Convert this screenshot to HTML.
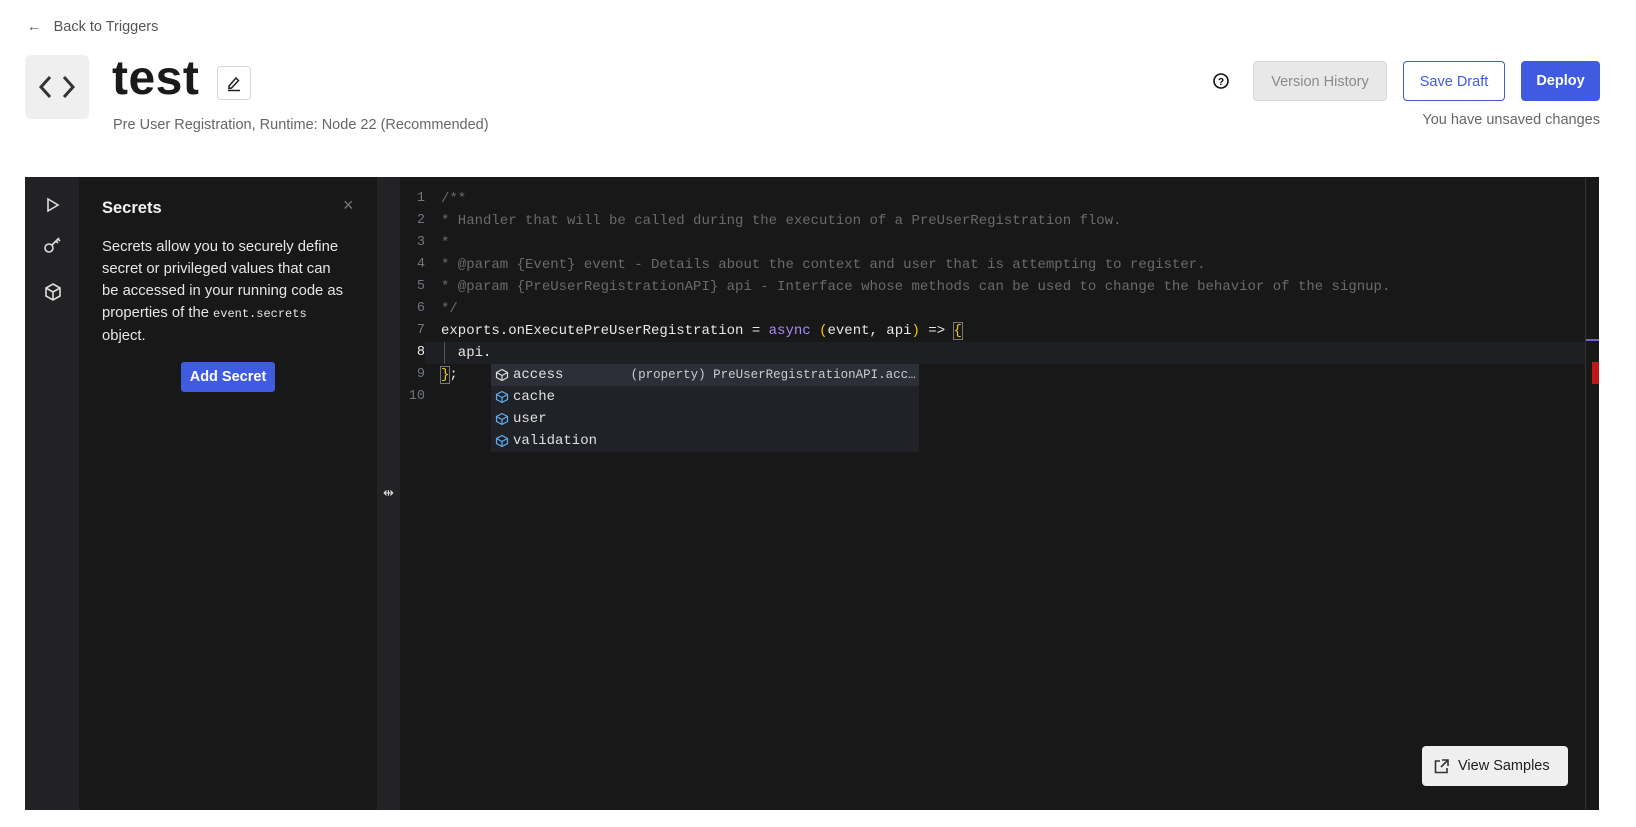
<!DOCTYPE html>
<html><head><meta charset="utf-8"><style>
*{margin:0;padding:0;box-sizing:border-box}
body{width:1636px;height:827px;background:#fff;font-family:"Liberation Sans",sans-serif;position:relative;overflow:hidden;color:#1e1e1e}
.a{position:absolute}
.mono{font-family:"Liberation Mono",monospace}
.ln{position:absolute;left:400px;width:25px;text-align:right;font-size:13.5px;color:#6e7681;font-family:"Liberation Mono",monospace;line-height:22px}
.cl{position:absolute;left:441px;font-size:14px;line-height:22px;font-family:"Liberation Mono",monospace;white-space:pre;color:#6a6a6a}
.sg{position:absolute;left:491px;width:428px;height:22px;font-family:"Liberation Mono",monospace;font-size:14px;line-height:22px;color:#e0e0e0;padding-left:22px;white-space:pre}
.sg svg{position:absolute;left:4px;top:4px}
</style></head><body>
<div class="a" style="left:27px;top:19px;font-size:14.5px;color:#555">←&nbsp;&nbsp;&nbsp;Back to Triggers</div>
<div class="a" style="left:25px;top:55px;width:64px;height:64px;background:#efefef;border-radius:6px"></div>
<svg class="a" style="left:37px;top:72px" width="40" height="30" viewBox="0 0 40 30"><path d="M13 5 L4 15 L13 25 M27 5 L36 15 L27 25" stroke="#333" stroke-width="3" fill="none"/></svg>
<div class="a" style="left:112px;top:51px;font-size:48px;font-weight:bold;color:#1a1a1a;letter-spacing:.5px">test</div>
<div class="a" style="left:217px;top:66px;width:34px;height:34px;border:1px solid #d5d5d5;border-radius:4px"></div>
<svg class="a" style="left:226px;top:74px" width="16" height="18" viewBox="0 0 16 18"><path d="M3 12 L10 4 L12.5 6.5 L5.5 14 L3 14.5 Z" stroke="#222" stroke-width="1.5" fill="none"/><path d="M2 16.5 H14" stroke="#222" stroke-width="1.5"/></svg>
<div class="a" style="left:113px;top:117px;font-size:14.5px;color:#666">Pre User Registration, Runtime: Node 22 (Recommended)</div>
<svg class="a" style="left:1212px;top:72px" width="18" height="18" viewBox="0 0 18 18"><circle cx="9" cy="9" r="7" stroke="#111" stroke-width="1.6" fill="none"/><text x="9" y="13" font-size="10" font-weight="bold" text-anchor="middle" font-family="Liberation Sans">?</text></svg>
<div class="a" style="left:1253px;top:61px;width:134px;height:40px;background:#e8e8e8;border:1px solid #d8d8d8;border-radius:4px;color:#8a8a8a;font-size:14.5px;line-height:40px;text-align:center">Version History</div>
<div class="a" style="left:1403px;top:61px;width:102px;height:40px;border:1px solid #3f5be0;border-radius:4px;color:#3f5be0;font-size:14.5px;line-height:40px;text-align:center">Save Draft</div>
<div class="a" style="left:1521px;top:61px;width:79px;height:40px;background:#3f5be0;border-radius:4px;color:#fff;font-size:14.5px;font-weight:bold;line-height:41px;text-align:center">Deploy</div>
<div class="a" style="right:36px;top:112px;font-size:14.5px;color:#666">You have unsaved changes</div>

<div class="a" style="left:25px;top:177px;width:1574px;height:633px;background:#181818"></div>
<div class="a" style="left:25px;top:177px;width:54px;height:633px;background:#222224"></div>
<div class="a" style="left:377px;top:177px;width:23px;height:633px;background:#232325"></div>
<svg class="a" style="left:44px;top:196px" width="18" height="130" viewBox="0 0 18 130" fill="none" stroke="#ddd" stroke-width="1.6"><path d="M4 3 L14 9 L4 15 Z"/><circle cx="5" cy="52" r="4"/><path d="M8 49 L15 42 M12 45 L14 47 M14 43 L16 45"/><path d="M9 88 L16 92 V100 L9 104 L2 100 V92 Z M2 92 L9 96 L16 92 M9 96 V104"/></svg>
<div class="a" style="left:102px;top:199px;font-size:16.5px;font-weight:bold;color:#f2f2f2">Secrets</div>
<div class="a" style="left:343px;top:195px;font-size:18px;color:#777">×</div>
<div class="a" style="left:102px;top:236px;white-space:nowrap;font-size:14.8px;line-height:22px;color:#e6e6e6">Secrets allow you to securely define<br>secret or privileged values that can<br>be accessed in your running code as<br>properties of the <span class="mono" style="font-size:12px">event.secrets</span><br>object.</div>
<div class="a" style="left:181px;top:362px;width:94px;height:30px;background:#3f5be0;border-radius:3px;color:#fff;font-size:14.5px;line-height:30px;text-align:center;font-weight:bold">Add Secret</div>
<div class="a" style="left:383px;top:485px;font-size:13px;color:#ddd">⇹</div>

<div class="a" style="left:425px;top:342px;width:1161px;height:22px;background:#1e1f23"></div>
<div class="ln" style="top:188px">1</div><div class="ln" style="top:210px">2</div><div class="ln" style="top:232px">3</div><div class="ln" style="top:254px">4</div><div class="ln" style="top:276px">5</div><div class="ln" style="top:298px">6</div><div class="ln" style="top:320px">7</div><div class="ln" style="top:342px;color:#eee">8</div><div class="ln" style="top:364px">9</div><div class="ln" style="top:386px">10</div>
<div class="cl" style="top:188px">/**</div>
<div class="cl" style="top:210px">* Handler that will be called during the execution of a PreUserRegistration flow.</div>
<div class="cl" style="top:232px">*</div>
<div class="cl" style="top:254px">* @param {Event} event - Details about the context and user that is attempting to register.</div>
<div class="cl" style="top:276px">* @param {PreUserRegistrationAPI} api - Interface whose methods can be used to change the behavior of the signup.</div>
<div class="cl" style="top:298px">*/</div>
<div class="cl" style="top:320px;color:#e8e8e8">exports.onExecutePreUserRegistration = <span style="color:#a78bfa">async</span> <span style="color:#f5c518">(</span>event, api<span style="color:#f5c518">)</span> =&gt; <span style="color:#f5c518;outline:1px solid #777">{</span></div>
<div class="cl" style="top:342px;color:#e8e8e8">  api.</div>
<div class="cl" style="top:364px;color:#e8e8e8"><span style="color:#f5c518;outline:1px solid #777">}</span>;</div>
<div class="a" style="left:444px;top:342px;width:1px;height:22px;background:#555"></div>

<div class="a" style="left:491px;top:364px;width:428px;height:88px;background:#202228"></div>
<div class="sg" style="top:364px;background:#2c2f37">access        <span style="font-size:12.5px;color:#ccc">(property) PreUserRegistrationAPI.acc…</span><svg width="14" height="14" viewBox="0 0 14 14" fill="none" stroke="#ddd" stroke-width="1.2"><path d="M7 1.5 L12.5 4.5 V9.5 L7 12.5 L1.5 9.5 V4.5 Z M1.5 4.5 L7 7.5 L12.5 4.5 M7 7.5 V12.5"/></svg></div>
<div class="sg" style="top:386px">cache<svg width="14" height="14" viewBox="0 0 14 14" fill="none" stroke="#5fb0f0" stroke-width="1.2"><path d="M7 1.5 L12.5 4.5 V9.5 L7 12.5 L1.5 9.5 V4.5 Z M1.5 4.5 L7 7.5 L12.5 4.5 M7 7.5 V12.5"/></svg></div>
<div class="sg" style="top:408px">user<svg width="14" height="14" viewBox="0 0 14 14" fill="none" stroke="#5fb0f0" stroke-width="1.2"><path d="M7 1.5 L12.5 4.5 V9.5 L7 12.5 L1.5 9.5 V4.5 Z M1.5 4.5 L7 7.5 L12.5 4.5 M7 7.5 V12.5"/></svg></div>
<div class="sg" style="top:430px">validation<svg width="14" height="14" viewBox="0 0 14 14" fill="none" stroke="#5fb0f0" stroke-width="1.2"><path d="M7 1.5 L12.5 4.5 V9.5 L7 12.5 L1.5 9.5 V4.5 Z M1.5 4.5 L7 7.5 L12.5 4.5 M7 7.5 V12.5"/></svg></div>

<div class="a" style="left:1585px;top:177px;width:1px;height:633px;background:#333"></div>
<div class="a" style="left:1586px;top:339px;width:13px;height:2px;background:#7a5fd0"></div>
<div class="a" style="left:1592px;top:362px;width:7px;height:22px;background:#c01818"></div>

<div class="a" style="left:1422px;top:746px;width:146px;height:40px;background:#efefef;border-radius:4px;font-size:14.5px;line-height:40px;color:#1e1e1e;padding-left:36px">View Samples</div>
<svg class="a" style="left:1434px;top:759px" width="15" height="15" viewBox="0 0 15 15" fill="none" stroke="#333" stroke-width="1.6"><path d="M6 2 H1.5 V13.5 H13 V9 M8 1 H14 V7 M14 1 L7 8"/></svg>
</body></html>
